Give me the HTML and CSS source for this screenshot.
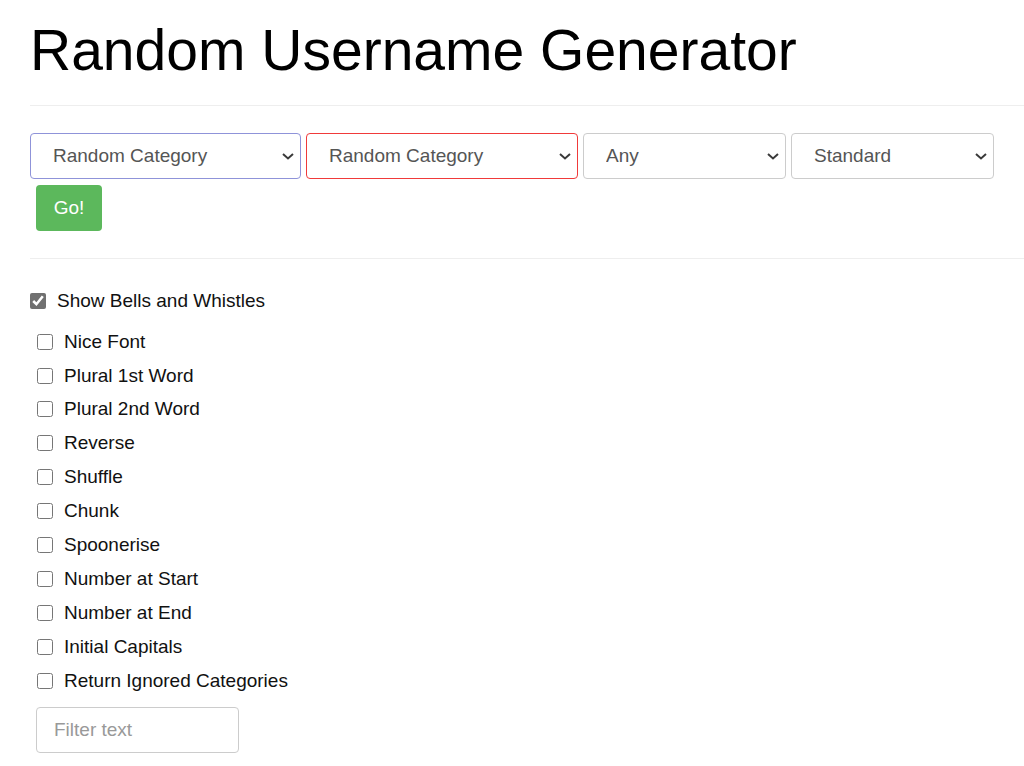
FILE: index.html
```html
<!DOCTYPE html>
<html lang="en">
<head>
    <meta charset="UTF-8">
    <meta name="viewport" content="width=device-width, initial-scale=1.0">
    <title>Random Username Generator</title>
    <link rel="stylesheet" href="styles.css">
</head>
<body>
    <div class="container">
        <h1>Random Username Generator</h1>
        <hr>

        <div class="controls">
            <div class="select-row">
                <div class="select-wrap">
                    <select class="cat-first">
                        <option>Random Category</option>
                    </select>
                    <svg class="chevron" viewBox="0 0 12 7"><path d="M1 1l5 4.5 5-4.5"/></svg>
                </div>
                <div class="select-wrap">
                    <select class="cat-second">
                        <option>Random Category</option>
                    </select>
                    <svg class="chevron" viewBox="0 0 12 7"><path d="M1 1l5 4.5 5-4.5"/></svg>
                </div>
                <div class="select-wrap">
                    <select class="small">
                        <option>Any</option>
                    </select>
                    <svg class="chevron" viewBox="0 0 12 7"><path d="M1 1l5 4.5 5-4.5"/></svg>
                </div>
                <div class="select-wrap">
                    <select class="small">
                        <option>Standard</option>
                    </select>
                    <svg class="chevron" viewBox="0 0 12 7"><path d="M1 1l5 4.5 5-4.5"/></svg>
                </div>
            </div>
            <button class="go-btn">Go!</button>
        </div>
        <hr class="divider">

        <label class="bells">
            <input type="checkbox" checked>
            <span>Show Bells and Whistles</span>
        </label>

        <div class="options">
            <label class="option"><input type="checkbox"><span>Nice Font</span></label>
            <label class="option"><input type="checkbox"><span>Plural 1st Word</span></label>
            <label class="option"><input type="checkbox"><span>Plural 2nd Word</span></label>
            <label class="option"><input type="checkbox"><span>Reverse</span></label>
            <label class="option"><input type="checkbox"><span>Shuffle</span></label>
            <label class="option"><input type="checkbox"><span>Chunk</span></label>
            <label class="option"><input type="checkbox"><span>Spoonerise</span></label>
            <label class="option"><input type="checkbox"><span>Number at Start</span></label>
            <label class="option"><input type="checkbox"><span>Number at End</span></label>
            <label class="option"><input type="checkbox"><span>Initial Capitals</span></label>
            <label class="option"><input type="checkbox"><span>Return Ignored Categories</span></label>
        </div>

        <input type="text" class="filter" placeholder="Filter text">
    </div>
</body>
</html>
```

FILE: styles.css
```css
* {
    margin: 0;
    padding: 0;
    box-sizing: border-box;
    font-family: "Liberation Sans", Arial, sans-serif;
}

body {
    background-color: white;
    color: #111;
    font-size: 19px;
}

.container {
    padding-left: 30px;
}

h1 {
    font-size: 57px;
    font-weight: normal;
    line-height: 1.1;
    margin-top: 19px;
    color: #000;
}

hr {
    border: none;
    border-top: 1px solid #eee;
    margin-top: 23px;
}

hr.divider {
    margin-top: 0;
}

.controls {
    padding-top: 27px;
    padding-bottom: 27px;
}

.select-row {
    display: flex;
    gap: 5px;
}

.select-wrap {
    position: relative;
}

.chevron {
    position: absolute;
    right: 7px;
    top: 20px;
    width: 12px;
    height: 7px;
    fill: none;
    stroke: #3a3a3a;
    stroke-width: 2;
    pointer-events: none;
}

select {
    display: block;
    appearance: none;
    height: 46px;
    font-size: 19px;
    color: #555;
    padding: 0 28px 0 22px;
    border: 1px solid #ccc;
    border-radius: 4px;
    background-color: white;
}

.cat-first {
    width: 271px;
    border-color: #8f93d9;
}

.cat-second {
    width: 272px;
    border-color: #f03a3a;
}

.small {
    width: 203px;
}

.go-btn {
    display: block;
    margin: 6px 0 0 6px;
    width: 66px;
    height: 46px;
    background-color: #5cb85c;
    color: white;
    border: none;
    border-radius: 4px;
    font-size: 19px;
}

.bells {
    display: flex;
    align-items: center;
    gap: 11px;
    height: 34px;
    margin-top: 25px;
}

.bells input {
    width: 16px;
    height: 16px;
    accent-color: #707070;
}

.options {
    margin-top: 7px;
    padding-left: 7px;
}

.option {
    display: flex;
    align-items: center;
    gap: 11px;
    height: 33.9px;
}

.option input {
    width: 16px;
    height: 16px;
}

.filter {
    display: block;
    margin: 10px 0 0 6px;
    width: 203px;
    height: 46px;
    padding: 0 17px;
    font-size: 19px;
    border: 1px solid #ccc;
    border-radius: 4px;
}

.filter::placeholder {
    color: #999;
}
```
